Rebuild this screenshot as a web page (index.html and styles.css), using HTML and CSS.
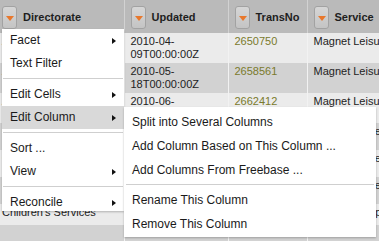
FILE: index.html
```html
<!DOCTYPE html>
<html lang="en">
<head>
<meta charset="UTF-8">
<meta name="viewport" content="width=device-width, initial-scale=1.0">
<title>Column menu</title>
<link rel="stylesheet" href="styles.css">
</head>
<body>

<table class="data-table">
  <colgroup>
    <col class="col-directorate">
    <col class="col-updated">
    <col class="col-transno">
    <col class="col-service">
  </colgroup>
  <thead>
    <tr>
      <th><div class="head"><span class="drop-btn"></span>Directorate</div></th>
      <th><div class="head"><span class="drop-btn"></span>Updated</div></th>
      <th><div class="head"><span class="drop-btn"></span>TransNo</div></th>
      <th><div class="head"><span class="drop-btn"></span>Service</div></th>
    </tr>
  </thead>
  <tbody>
    <tr>
      <td>Adult and Community Services</td>
      <td>2010-04-<br>09T00:00:00Z</td>
      <td class="num">2650750</td>
      <td>Magnet Leisure Centre</td>
    </tr>
    <tr>
      <td>Adult and Community Services</td>
      <td>2010-05-<br>18T00:00:00Z</td>
      <td class="num">2658561</td>
      <td>Magnet Leisure Centre</td>
    </tr>
    <tr>
      <td>Adult and Community Services</td>
      <td>2010-06-<br>01T00:00:00Z</td>
      <td class="num">2662412</td>
      <td>Magnet Leisure Centre</td>
    </tr>
    <tr class="mid">
      <td>Children's Services</td>
      <td>2010-04-</td>
      <td class="num">2650812</td>
      <td>Youth Service Centre One</td>
    </tr>
    <tr class="mid">
      <td>Children's Services</td>
      <td>2010-04-</td>
      <td class="num">2650915</td>
      <td>Youth Service Centre Two</td>
    </tr>
    <tr class="mid">
      <td>Children's Services</td>
      <td>2010-05-</td>
      <td class="num">2657003</td>
      <td>Youth Service Centre Two</td>
    </tr>
    <tr class="short">
      <td>Children's Services</td>
      <td>2010-05-</td>
      <td class="num">2657120</td>
      <td>Schools Support Team</td>
    </tr>
    <tr class="mid">
      <td></td>
      <td></td>
      <td></td>
      <td></td>
    </tr>
  </tbody>
</table>

<!-- column dropdown menu -->
<div class="menu main-menu">
  <div class="menu-item has-sub">Facet</div>
  <div class="menu-item">Text Filter</div>
  <div class="menu-sep"></div>
  <div class="menu-item has-sub">Edit Cells</div>
  <div class="menu-item has-sub active">Edit Column</div>
  <div class="menu-sep"></div>
  <div class="menu-item">Sort ...</div>
  <div class="menu-item has-sub">View</div>
  <div class="menu-sep"></div>
  <div class="menu-item has-sub last">Reconcile</div>
</div>

<div class="menu sub-menu">
  <div class="menu-item">Split into Several Columns</div>
  <div class="menu-item">Add Column Based on This Column ...</div>
  <div class="menu-item">Add Columns From Freebase ...</div>
  <div class="menu-sep"></div>
  <div class="menu-item">Rename This Column</div>
  <div class="menu-item">Remove This Column</div>
</div>

</body>
</html>
```

FILE: styles.css
```css
body {
    margin: 0;
    width: 379px;
    height: 241px;
    overflow: hidden;
    position: relative;
    background-color: #cfcfcf;
    font-family: "Liberation Sans", Arial, sans-serif;
    color: #222222;
}

.data-table {
    table-layout: fixed;
    border-collapse: collapse;
    width: 400px;
    margin-left: -4px;
    font-size: 11px;
}

.col-directorate { width: 128px; }
.col-updated { width: 104px; }
.col-transno { width: 79px; }
.col-service { width: 89px; }

th {
    height: 33px;
    padding: 0 0 0 6px;
    background-color: #bababa;
    border-right: 1px solid #d2d2d2;
    text-align: left;
    font-weight: bold;
    font-size: 11px;
    color: #1e1e1e;
}

.head {
    display: flex;
    align-items: center;
    gap: 6px;
    white-space: nowrap;
    padding-top: 1px;
}

.drop-btn {
    position: relative;
    flex: none;
    width: 13px;
    height: 21px;
    border: 1px solid #a2a2a2;
    border-radius: 3px;
    background: linear-gradient(#d6d6d6, #c4c4c4);
}

.drop-btn::after {
    content: "";
    position: absolute;
    left: 3px;
    top: 9px;
    border-left: 4px solid transparent;
    border-right: 4px solid transparent;
    border-top: 5px solid #e8772b;
}

td {
    height: 26px;
    padding: 2px 5px 2px 6px;
    vertical-align: top;
    line-height: 13px;
    white-space: nowrap;
    overflow: hidden;
    border-right: 1px solid #f2f2f2;
}

tbody tr:nth-child(odd) { background-color: #ebebeb; }
tbody tr:nth-child(even) { background-color: #d2d2d2; }

tr.mid td { height: 23px; }
tr.short td { height: 17px; }

.num {
    color: #7a7a2c;
}

/* menus */
.menu {
    position: absolute;
    background-color: #ffffff;
    font-size: 12px;
    color: #1a1a1a;
    box-shadow: 0 1px 2px rgba(0, 0, 0, 0.25);
}

.main-menu {
    left: 2px;
    top: 29px;
    width: 122px;
}

.sub-menu {
    left: 124px;
    top: 107px;
    width: 252px;
    height: 130px;
    padding-top: 3px;
    box-sizing: border-box;
}

.menu-item {
    position: relative;
    height: 23px;
    line-height: 23px;
    padding-left: 8px;
    white-space: nowrap;
}

.menu-item.last {
    height: 20px;
    line-height: 22px;
}

.sub-menu .menu-item {
    height: 24px;
    line-height: 24px;
}

.menu-item.active {
    background-color: #d9d9d9;
}

.has-sub::after {
    content: "";
    position: absolute;
    left: 110px;
    top: 9px;
    border-top: 3px solid transparent;
    border-bottom: 3px solid transparent;
    border-left: 4px solid #111111;
}

.menu-sep {
    height: 1px;
    margin: 3px 1px 4px 1px;
    background-color: #cfcfcf;
}

.sub-menu .menu-sep {
    margin: 2px 2px 3px 2px;
}
```
